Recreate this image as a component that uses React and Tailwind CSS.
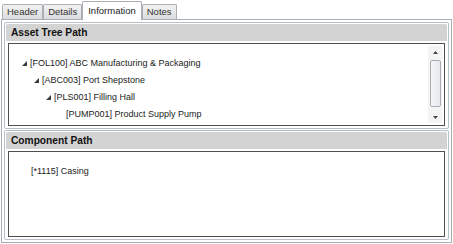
import React from "react";

const TABS = ["Header", "Details", "Information", "Notes"];

const TREE = [
  { depth: 0, label: "[FOL100] ABC Manufacturing & Packaging", open: true },
  { depth: 1, label: "[ABC003] Port Shepstone", open: true },
  { depth: 2, label: "[PLS001] Filling Hall", open: true },
  { depth: 3, label: "[PUMP001] Product Supply Pump", open: false },
];

function Arrow() {
  return (
    <svg width="5" height="5" viewBox="0 0 5 5" className="shrink-0">
      <polygon points="5,0 5,5 0,5" fill="#3c3c3c" />
    </svg>
  );
}

function Tab({ label, active }) {
  if (active) {
    return (
      <div className="h-[19px] px-[5px] -mb-px border border-b-0 border-[#a9aeb5] bg-white flex items-center text-[#222] z-10 rounded-t-[2px]">
        {label}
      </div>
    );
  }
  return (
    <div className="h-[15px] px-[4px] border border-b-0 border-[#a9aeb5] bg-gradient-to-b from-[#f2f2f2] to-[#dcdcdc] flex items-center text-[#333] rounded-t-[2px]">
      {label}
    </div>
  );
}

function ScrollBar() {
  return (
    <div className="w-[14px] my-[2px] mr-[2px] flex flex-col items-center bg-[#f4f4f4]">
      <div className="h-[12px] flex items-center justify-center">
        <svg width="5" height="3" viewBox="0 0 5 3">
          <polygon points="2.5,0 5,3 0,3" fill="#444" />
        </svg>
      </div>
      <div className="w-[11px] flex-1 mt-[2px] mb-[4px] border border-[#a7adb5] rounded-[2px] bg-gradient-to-r from-[#f6f6f6] to-[#e6e9ee]" />
      <div className="h-[12px] flex items-center justify-center">
        <svg width="5" height="3" viewBox="0 0 5 3">
          <polygon points="0,0 5,0 2.5,3" fill="#444" />
        </svg>
      </div>
    </div>
  );
}

function Section({ title, children, className }) {
  return (
    <div className={`flex flex-col border border-[#b9bfc7] rounded-[2px] p-px ${className}`}>
      <div className="h-[17px] bg-[#d3d3d3] rounded-t-[2px] flex items-center px-[5px] font-bold text-[10.2px] text-[#111]">
        {title}
      </div>
      <div className="flex-1 mt-[2px] mx-[2px] mb-px border border-[#4f4f4f] bg-white flex">
        {children}
      </div>
    </div>
  );
}

export default function App() {
  return (
    <div
      className="w-[453px] h-[244px] bg-white text-[9.5px] flex flex-col"
      style={{ fontFamily: '"Liberation Sans", Arial, sans-serif' }}
    >
      {/* tab strip */}
      <div className="h-[19px] flex items-end pl-[2px] shrink-0">
        {TABS.map((t) => (
          <Tab key={t} label={t} active={t === "Information"} />
        ))}
      </div>

      {/* tab content */}
      <div className="flex-1 mx-px mb-px border border-[#a9aeb5] flex flex-col gap-[1px] p-[2px]">
        <Section title="Asset Tree Path" className="h-[107px]">
          <div className="flex-1 pt-[11px] pl-[13px] flex flex-col text-[9px] text-[#222]">
            {TREE.map((n) => (
              <div
                key={n.label}
                className="h-[17px] flex items-center"
                style={{ paddingLeft: n.depth * 12 }}
              >
                <div className="w-[8px] flex items-center">
                  {n.open && <Arrow />}
                </div>
                <span>{n.label}</span>
              </div>
            ))}
          </div>
          <ScrollBar />
        </Section>

        <Section title="Component Path" className="flex-1">
          <div className="pt-[13px] pl-[22px] text-[9px] text-[#222]">[*1115] Casing</div>
        </Section>
      </div>
    </div>
  );
}
